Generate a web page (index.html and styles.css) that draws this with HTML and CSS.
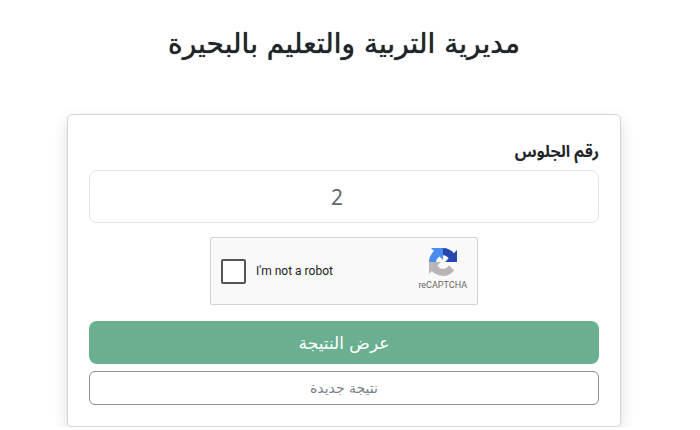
FILE: index.html
```html
<!DOCTYPE html>
<html lang="ar" dir="rtl">
<head>
    <meta charset="UTF-8">
    <meta name="viewport" content="width=device-width, initial-scale=1.0">
    <title>مديرية التربية والتعليم بالبحيرة</title>
    <link rel="stylesheet" href="styles.css">
</head>
<body>
    <main class="container">
        <h1>مديرية التربية والتعليم بالبحيرة</h1>

        <form class="card">
            <label class="title" for="seat">رقم الجلوس</label>
            <input class="seat" type="text" id="seat" value="2">

            <div class="captcha" dir="ltr">
                <input type="checkbox" id="robot">
                <label for="robot">I'm not a robot</label>
                <div class="brand">
                    <svg viewBox="0 0 64 64" width="28" height="28" aria-hidden="true">
                        <path fill="#2747ae" d="M64 31.955l-.033-1.37V4.687l-7.16 7.16C50.948 4.674 42.033.093 32.05.093c-10.4 0-19.622 4.96-25.458 12.64l11.736 11.86a15.55 15.55 0 0 1 4.754-5.334c2.05-1.6 4.952-2.906 8.968-2.906.485 0 .86.057 1.135.163 4.976.393 9.288 3.14 11.828 7.124l-8.307 8.307L64 31.953"/>
                        <path fill="#4a8cf0" d="M31.862.094l-1.37.033H4.594l7.16 7.16C4.58 13.147 0 22.06 0 32.046c0 10.4 4.96 19.622 12.64 25.458L24.5 45.768a15.55 15.55 0 0 1-5.334-4.754c-1.6-2.05-2.906-4.952-2.906-8.968 0-.485.057-.86.163-1.135.393-4.976 3.14-9.288 7.124-11.828l8.307 8.307L31.86.095"/>
                        <path fill="#b9b5b8" d="M.001 32.045l.033 1.37v25.898l7.16-7.16c5.86 7.173 14.774 11.754 24.76 11.754 10.4 0 19.622-4.96 25.458-12.64l-11.736-11.86a15.55 15.55 0 0 1-4.754 5.334c-2.05 1.6-4.952 2.906-8.968 2.906-.485 0-.86-.057-1.135-.163-4.976-.393-9.288-3.14-11.828-7.124l8.307-8.307c-10.522.04-22.4.066-27.295-.005"/>
                    </svg>
                    <span>reCAPTCHA</span>
                </div>
            </div>

            <button class="btn btn-show" type="submit">عرض النتيجة</button>
            <button class="btn btn-new" type="reset">نتيجة جديدة</button>
        </form>
    </main>
</body>
</html>
```

FILE: styles.css
```css
* {
    box-sizing: border-box;
}

body {
    margin: 0;
    background-color: #fff;
    color: #212529;
    font-family: "DejaVu Sans", sans-serif;
}

.container {
    padding: 24px 79px 0 67px;
}

h1 {
    margin: 0 0 50px;
    font-size: 28px;
    font-weight: 500;
    line-height: 40px;
    text-align: center;
    text-shadow: 0 0 1px #212529;
}

.card {
    display: flex;
    flex-direction: column;
    padding: 21px;
    border: 1px solid #d5d5d6;
    border-radius: 5px;
    box-shadow: 0 6px 14px rgba(0, 0, 0, 0.15);
}

.title {
    margin-bottom: 4px;
    font-family: "Noto Sans", "Noto Sans Arabic", sans-serif;
    font-size: 16px;
    font-weight: 700;
    line-height: 30px;
}

.seat {
    width: 100%;
    height: 53px;
    padding: 8px 28px 8px 14px;
    border: 1px solid #e2e3e4;
    border-radius: 8px;
    background-color: #fff;
    color: #666;
    font-family: "Noto Sans", sans-serif;
    font-size: 21px;
    text-align: center;
}

.captcha {
    display: flex;
    align-items: center;
    align-self: center;
    width: 268px;
    height: 68px;
    margin: 14px 0 16px;
    padding: 0 10px;
    border: 1px solid #d3d3d3;
    border-radius: 2px;
    background-color: #f9f9f9;
    color: #222;
    font-family: Roboto, sans-serif;
    font-size: 12px;
}

.captcha input {
    appearance: none;
    width: 25px;
    height: 25px;
    margin: 0 10px 0 0;
    border: 2px solid #555;
    border-radius: 2px;
    background-color: #fff;
}

.brand {
    display: flex;
    flex-direction: column;
    align-items: center;
    margin-left: auto;
    color: #666;
    font-family: Roboto, sans-serif;
    font-size: 9px;
    line-height: 18px;
}

.btn {
    width: 100%;
    font-family: inherit;
    cursor: pointer;
}

.btn-show {
    height: 43px;
    margin-bottom: 7px;
    border: none;
    border-radius: 8px;
    background-color: #6ab090;
    color: #fff;
    font-size: 17px;
    font-weight: 500;
}

.btn-new {
    height: 34px;
    border: 1px solid #8d9196;
    border-radius: 6px;
    background-color: #fff;
    color: #7b828a;
    font-size: 14px;
}
```
